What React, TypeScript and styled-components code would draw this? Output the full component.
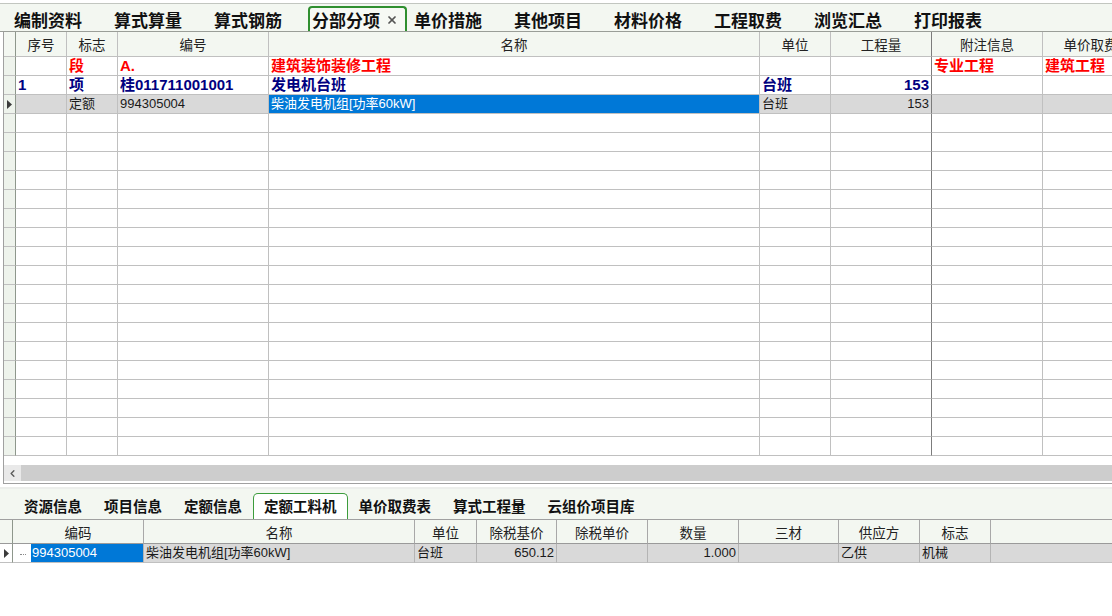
import React from 'react'
import styled, { createGlobalStyle } from 'styled-components'
import { X, ChevronLeft } from 'lucide-react'

const GlobalStyle = createGlobalStyle`
  html, body {
    margin: 0;
    padding: 0;
    background: #ffffff;
  }
  body {
    font-family: 'Noto Sans CJK SC', 'Liberation Sans', sans-serif;
    color: #111;
  }
`

type Col = { key: string; title: string; w: number; align?: 'left' | 'right' | 'center'; strong?: boolean }
type Row = Record<string, string>

const MAIN_COLS: Col[] = [
  { key: 'idx', title: '序号', w: 51 },
  { key: 'flag', title: '标志', w: 51 },
  { key: 'code', title: '编号', w: 151 },
  { key: 'name', title: '名称', w: 491 },
  { key: 'unit', title: '单位', w: 71 },
  { key: 'qty', title: '工程量', w: 101, align: 'right', strong: true },
  { key: 'note', title: '附注信息', w: 111 },
  { key: 'fee', title: '单价取费', w: 96 },
]

const MAIN_ROWS: Row[] = [
  { kind: 'section', flag: '段', code: 'A.', name: '建筑装饰装修工程', note: '专业工程', fee: '建筑工程' },
  { kind: 'item', idx: '1', flag: '项', code: '桂011711001001', name: '发电机台班', unit: '台班', qty: '153' },
  { kind: 'quota', flag: '定额', code: '994305004', name: '柴油发电机组[功率60kW]', unit: '台班', qty: '153' },
]

const SUB_COLS: Col[] = [
  { key: 'code', title: '编码', w: 131 },
  { key: 'name', title: '名称', w: 271 },
  { key: 'unit', title: '单位', w: 62 },
  { key: 'base', title: '除税基价', w: 80, align: 'right' },
  { key: 'price', title: '除税单价', w: 91, align: 'right' },
  { key: 'count', title: '数量', w: 91, align: 'right' },
  { key: 'three', title: '三材', w: 100 },
  { key: 'supplier', title: '供应方', w: 81 },
  { key: 'flag', title: '标志', w: 71 },
  { key: 'rest', title: '', w: 140 },
]

const TOP_TABS = ['编制资料', '算式算量', '算式钢筋', '分部分项', '单价措施', '其他项目', '材料价格', '工程取费', '浏览汇总', '打印报表']
const BOTTOM_TABS = ['资源信息', '项目信息', '定额信息', '定额工料机', '单价取费表', '算式工程量', '云组价项目库']

const TOTAL_ROWS = 21

const template = (indicator: number, cols: Col[]) => `${indicator}px ` + cols.map((c) => `${c.w}px`).join(' ')

const Indicator = () => (
  <svg width='5' height='9' viewBox='0 0 5 9'>
    <polygon points='0,0 5,4.5 0,9' fill='#3c3c3c' />
  </svg>
)

const App = () => {
  const mainTpl = template(12, MAIN_COLS)
  const subTpl = template(13, SUB_COLS)
  const rows: Row[] = Array.from({ length: TOTAL_ROWS }, (_, i) => MAIN_ROWS[i] || { kind: 'empty' })

  return (
    <Page>
      <GlobalStyle />
      <TopTabBar>
        {TOP_TABS.map((t, i) =>
          i === 3 ? (
            <TopTab key={t} $active>
              {t}
              <CloseIcon>
                <X size={12} strokeWidth={3.5} color='#555' />
              </CloseIcon>
            </TopTab>
          ) : (
            <TopTab key={t}>{t}</TopTab>
          )
        )}
      </TopTabBar>

      <MainFrame>
        <GridRow $tpl={mainTpl}>
          <IndicatorCell $header />
          {MAIN_COLS.map((c) => (
            <HeaderCell key={c.key} $strong={c.strong}>
              {c.title}
            </HeaderCell>
          ))}
        </GridRow>
        {rows.map((r, i) => (
          <GridRow key={i} $tpl={mainTpl}>
            <IndicatorCell>{r.kind === 'quota' && <Indicator />}</IndicatorCell>
            {MAIN_COLS.map((c) => (
              <DataCell
                key={c.key}
                $align={c.align}
                $strong={c.strong}
                $tone={r.kind}
                $selected={r.kind === 'quota'}
                $focus={r.kind === 'quota' && c.key === 'name'}
              >
                {r[c.key]}
              </DataCell>
            ))}
          </GridRow>
        ))}
        <Spacer />
        <ScrollBar>
          <ScrollButton>
            <ChevronLeft size={11} strokeWidth={3} color='#5a5a5a' />
          </ScrollButton>
          <ScrollThumb />
        </ScrollBar>
      </MainFrame>

      <BottomTabBar>
        {BOTTOM_TABS.map((t, i) => (
          <BottomTab key={t} $active={i === 3}>
            {t}
          </BottomTab>
        ))}
      </BottomTabBar>

      <SubGrid>
        <GridRow $tpl={subTpl}>
          <SubIndicator $header />
          {SUB_COLS.map((c) => (
            <SubHeaderCell key={c.key}>{c.title}</SubHeaderCell>
          ))}
        </GridRow>
        <GridRow $tpl={subTpl}>
          <SubIndicator>
            <Indicator />
          </SubIndicator>
          <SubCodeCell>
            <TreeDots />
            <CodeHighlight>994305004</CodeHighlight>
          </SubCodeCell>
          <SubCell>柴油发电机组[功率60kW]</SubCell>
          <SubCell>台班</SubCell>
          <SubCell $align='right'>650.12</SubCell>
          <SubCell $align='right' />
          <SubCell $align='right'>1.000</SubCell>
          <SubCell />
          <SubCell>乙供</SubCell>
          <SubCell>机械</SubCell>
          <SubCell />
        </GridRow>
      </SubGrid>
    </Page>
  )
}

const Page = styled.div`
  width: 1112px;
  height: 616px;
  overflow: hidden;
  background: #ffffff;
  display: flex;
  flex-direction: column;
`

const TopTabBar = styled.div`
  margin-top: 3px;
  height: 27px;
  border-top: 1px solid #c2c6c0;
  border-bottom: 1px solid #9a9e98;
  background: #f3f7f1;
  display: flex;
  align-items: flex-end;
  padding-left: 8px;
`

const TopTab = styled.div<{ $active?: boolean }>`
  box-sizing: border-box;
  width: ${(p) => (p.$active ? '99px' : '100px')};
  margin-right: ${(p) => (p.$active ? '1px' : '0')};
  height: 25px;
  padding-left: ${(p) => (p.$active ? '2px' : '4px')};
  display: flex;
  align-items: center;
  font-size: 17px;
  font-weight: 700;
  color: #111;
  white-space: nowrap;
  border: ${(p) => (p.$active ? '2px solid #2f8f2f' : '2px solid transparent')};
  border-bottom: none;
  border-radius: 4px 4px 0 0;
  background: ${(p) => (p.$active ? '#f6f9f4' : 'transparent')};
`

const CloseIcon = styled.span`
  display: inline-flex;
  margin-left: 6px;
  margin-top: 1px;
`

const MainFrame = styled.div`
  margin-left: 3px;
  width: 1109px;
  height: 451px;
  border-left: 1px solid #a0a0a0;
  border-bottom: 1px solid #a0a0a0;
  background: #ffffff;
  overflow: hidden;
  display: flex;
  flex-direction: column;
`

const GridRow = styled.div<{ $tpl: string }>`
  display: grid;
  grid-template-columns: ${(p) => p.$tpl};
  flex: none;
`

const IndicatorCell = styled.div<{ $header?: boolean }>`
  box-sizing: border-box;
  height: ${(p) => (p.$header ? '25px' : '19px')};
  background: ${(p) => (p.$header ? '#f3f7f1' : '#eef3ec')};
  border-right: 1px solid #8e978c;
  border-bottom: 1px solid #c0c0c0;
  display: flex;
  align-items: center;
  justify-content: center;
  padding-right: 1px;
`

const HeaderCell = styled.div<{ $strong?: boolean }>`
  box-sizing: border-box;
  height: 25px;
  background: #f3f7f1;
  border-right: 1px solid ${(p) => (p.$strong ? '#7c7c7c' : '#c0c0c0')};
  border-bottom: 1px solid #c0c0c0;
  display: flex;
  align-items: center;
  justify-content: center;
  font-size: 13.5px;
  color: #222;
  white-space: nowrap;
  overflow: hidden;
`

const TONES: Record<string, string> = {
  section: '#ff0000',
  item: '#000080',
  quota: '#1a1a1a',
  empty: '#1a1a1a',
}

const DataCell = styled.div<{
  $align?: string
  $strong?: boolean
  $tone: string
  $selected?: boolean
  $focus?: boolean
}>`
  box-sizing: border-box;
  height: 19px;
  padding: 0 2px;
  border-right: 1px solid ${(p) => (p.$strong ? '#7c7c7c' : '#c0c0c0')};
  border-bottom: 1px solid #c0c0c0;
  background: ${(p) => (p.$focus ? '#0078d7' : p.$selected ? '#d9d9d9' : '#ffffff')};
  color: ${(p) => (p.$focus ? '#ffffff' : TONES[p.$tone])};
  font-family: 'Liberation Sans', 'Noto Sans CJK SC', sans-serif;
  font-size: ${(p) => (p.$tone === 'section' || p.$tone === 'item' ? '15px' : '13px')};
  font-weight: ${(p) => (p.$tone === 'section' || p.$tone === 'item' ? 700 : 400)};
  line-height: 18px;
  text-align: ${(p) => p.$align || 'left'};
  white-space: nowrap;
  overflow: hidden;
`

const Spacer = styled.div`
  height: 9px;
  flex: none;
`

const ScrollBar = styled.div`
  height: 16px;
  display: flex;
  flex: none;
`

const ScrollButton = styled.div`
  width: 17px;
  background: #e9e9e9;
  display: flex;
  align-items: center;
  justify-content: center;
`

const ScrollThumb = styled.div`
  flex: 1;
  background: #cdcdcd;
`

const BottomTabBar = styled.div`
  margin-top: 3px;
  height: 30px;
  background: #f3f7f1;
  border-top: 2px solid #eceeeb;
  border-bottom: 1px solid #a0a0a0;
  display: flex;
  align-items: flex-end;
  padding-left: 13px;
`

const BottomTab = styled.div<{ $active?: boolean }>`
  box-sizing: border-box;
  height: 26px;
  padding: 0 10px 2px;
  display: flex;
  align-items: center;
  font-size: 14.5px;
  font-weight: 700;
  color: #111;
  white-space: nowrap;
  border: 1px solid ${(p) => (p.$active ? '#3c9c3c' : 'transparent')};
  border-bottom: none;
  border-radius: 5px 5px 0 0;
  background: ${(p) => (p.$active ? '#ffffff' : 'transparent')};
`

const SubGrid = styled.div`
  width: 1112px;
  overflow: hidden;
  background: #ffffff;
`

const SubIndicator = styled.div<{ $header?: boolean }>`
  box-sizing: border-box;
  height: ${(p) => (p.$header ? '24px' : '19px')};
  background: ${(p) => (p.$header ? '#f3f7f1' : '#ffffff')};
  border-right: 1px solid #8e978c;
  border-bottom: 1px solid ${(p) => (p.$header ? '#9a9a9a' : '#c0c0c0')};
  display: flex;
  align-items: center;
  justify-content: center;
`

const SubHeaderCell = styled.div`
  box-sizing: border-box;
  height: 24px;
  background: #f3f7f1;
  border-right: 1px solid #a8a8a8;
  border-bottom: 1px solid #9a9a9a;
  display: flex;
  align-items: center;
  justify-content: center;
  font-size: 13.5px;
  color: #222;
  white-space: nowrap;
  &:last-child {
    border-right: none;
  }
`

const SubCell = styled.div<{ $align?: string }>`
  box-sizing: border-box;
  height: 19px;
  padding: 0 2px;
  background: #d9d9d9;
  border-right: 1px solid #b4b4b4;
  border-bottom: 1px solid #c0c0c0;
  font-family: 'Liberation Sans', 'Noto Sans CJK SC', sans-serif;
  font-size: 13px;
  line-height: 18px;
  color: #1a1a1a;
  text-align: ${(p) => p.$align || 'left'};
  white-space: nowrap;
  overflow: hidden;
  &:last-child {
    border-right: none;
  }
`

const SubCodeCell = styled.div`
  box-sizing: border-box;
  height: 19px;
  background: #ffffff;
  border-right: 1px solid #b4b4b4;
  border-bottom: 1px solid #c0c0c0;
  display: flex;
  align-items: center;
  padding-left: 7px;
`

const TreeDots = styled.span`
  width: 6px;
  height: 0;
  border-top: 1px dotted #8a8a8a;
  margin-right: 5px;
  margin-top: 2px;
`

const CodeHighlight = styled.span`
  flex: 1;
  height: 18px;
  background: #0078d7;
  color: #ffffff;
  font-family: 'Liberation Sans', sans-serif;
  font-size: 13px;
  line-height: 18px;
  padding-left: 1px;
`

export default App
